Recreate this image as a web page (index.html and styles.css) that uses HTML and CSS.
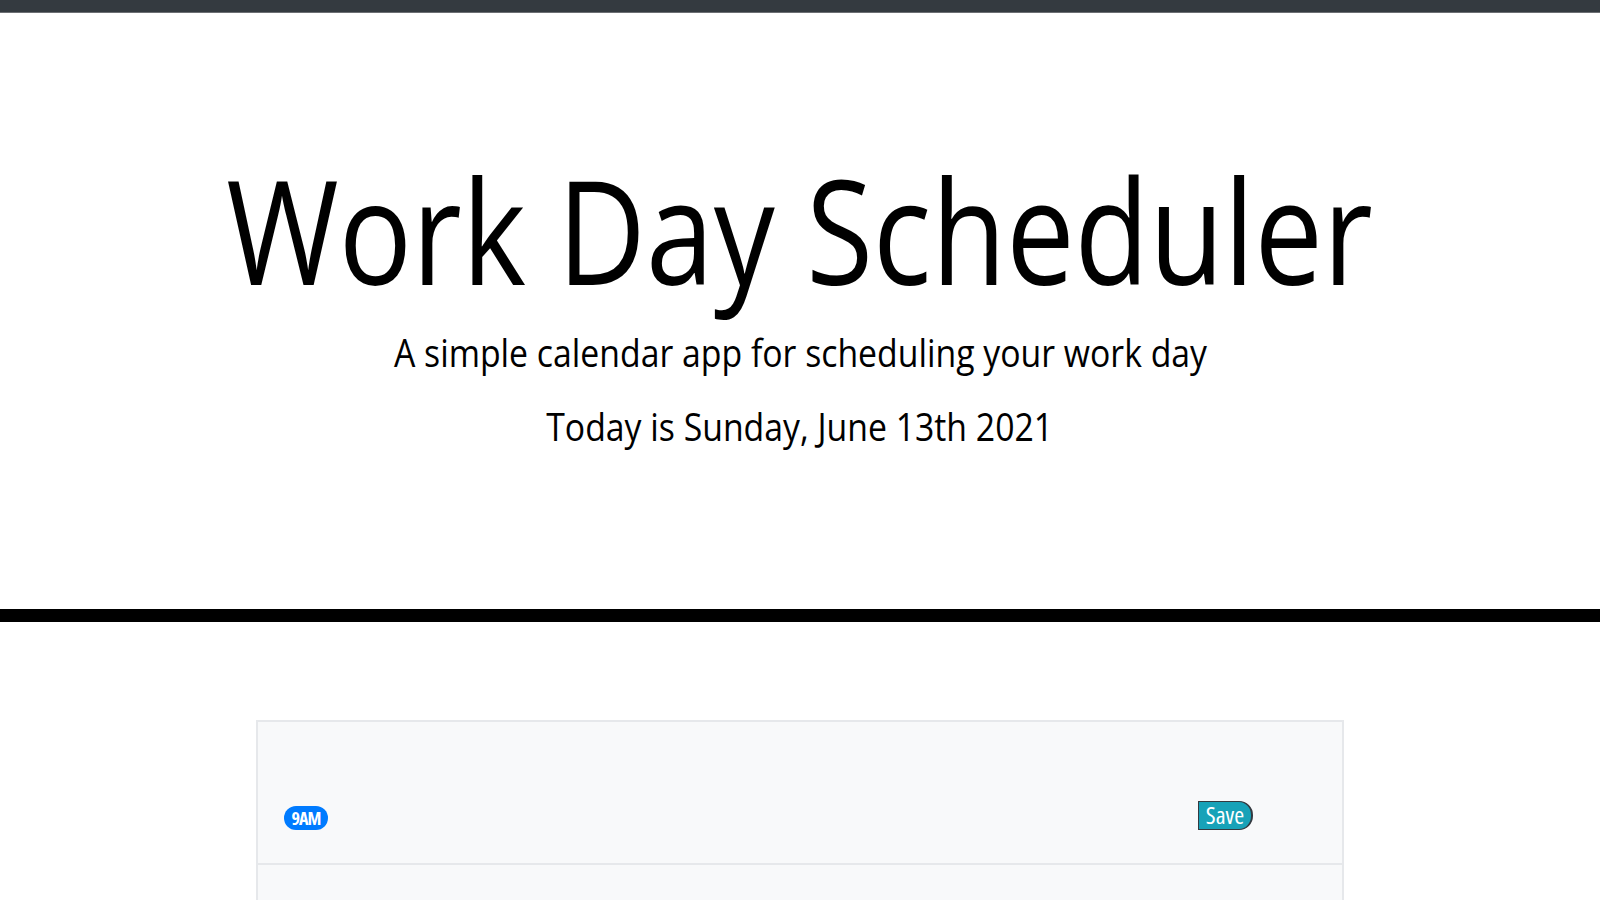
FILE: index.html
```html
<!DOCTYPE html>
<html lang="en">
<head>
<meta charset="utf-8">
<title>Work Day Scheduler</title>
<link rel="stylesheet" href="styles.css">
</head>
<body>
<div class="topbar"></div>
<header class="jumbotron">
  <h1 class="display">Work Day Scheduler</h1>
  <p class="lead">A simple calendar app for scheduling your work day</p>
  <p class="lead date">Today is Sunday, June 13th 2021</p>
</header>
<main class="container">
  <div class="hour-row">
    <span class="badge">9AM</span>
    <div class="slot"></div>
    <button class="save">Save</button>
  </div>
  <div class="hour-row">
    <span class="badge">10AM</span>
    <div class="slot"></div>
    <button class="save">Save</button>
  </div>
</main>
</body>
</html>
```
FILE: styles.css
```css
html, body {
  margin: 0;
  padding: 0;
  background: #ffffff;
  font-family: "Open Sans", "Noto Sans", sans-serif;
  color: #000;
  overflow: hidden;
  height: 900px;
}
.topbar {
  height: 12px;
  background: #343a40;
  border-bottom: 1px solid #6c6f73;
}
.jumbotron {
  height: 609px;
  border-bottom: 13px solid #000;
  box-sizing: border-box;
  display: flex;
  flex-direction: column;
  align-items: center;
  padding-top: 130px;
}
.display {
  margin: 0;
  font-size: 144px;
  font-weight: 400;
  line-height: 1.2;
  letter-spacing: 0;
  white-space: nowrap;
  transform: scaleX(0.846);
}
.lead {
  margin: 13px 0 0;
  font-size: 39px;
  font-weight: 400;
  line-height: 1.2;
  white-space: nowrap;
  transform: scaleX(0.866);
}
.date {
  margin-top: 27px;
}
.container {
  width: 1088px;
  margin: 98px auto 0;
  box-sizing: border-box;
}
.hour-row {
  height: 144px;
  box-sizing: border-box;
  background: #f8f9fa;
  border: 2px solid #e6e8eb;
  border-bottom-width: 1px;
  display: flex;
  align-items: flex-end;
  padding: 0 0 33px 26px;
}
.hour-row + .hour-row {
  border-top: 1px solid #e6e8eb;
}
.badge {
  display: inline-block;
  background: #007bff;
  color: #fff;
  font-weight: 700;
  font-size: 18px;
  font-stretch: 75%;
  letter-spacing: -1px;
  border-radius: 12px;
  height: 24px;
  line-height: 24px;
  padding: 0 7px;
  box-sizing: border-box;
  min-width: 44px;
  text-align: center;
}
.slot {
  flex: 1;
}
.save {
  font-family: "Open Sans", sans-serif;
  font-stretch: 78%;
  background: #17a2b8;
  color: #fff;
  font-size: 24px;
  font-weight: 400;
  height: 29px;
  width: 55px;
  padding: 0 0 3px;
  line-height: 25px;
  border: 1px solid #343a40;
  border-right-width: 2px;
  border-radius: 0 14px 14px 0;
  margin-right: 89px;
  margin-bottom: 0;
}
```
